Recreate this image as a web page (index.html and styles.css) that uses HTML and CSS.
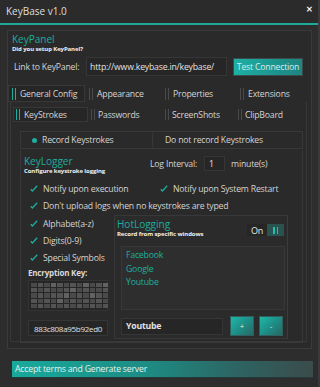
FILE: index.html
```html
<!DOCTYPE html>
<html>
<head>
<meta charset="utf-8">
<title>KeyBase v1.0</title>
<link rel="stylesheet" href="styles.css">
</head>
<body>
<div class="window">
  <header class="titlebar">
    <span class="title">KeyBase v1.0</span>
    <span class="close">✕</span>
  </header>
  <main class="content">
    <section class="outer">
      <div class="heading kp">
        <div class="h-title">KeyPanel</div>
        <div class="h-sub">Did you setup KeyPanel?</div>
      </div>
      <div class="link-row">
        <span class="label">Link to KeyPanel:</span>
        <div class="field url">http://www.keybase.in/keybase/</div>
        <div class="btn test">Test Connection</div>
      </div>
      <nav class="tabs main-tabs">
        <div class="tab active"><i class="bars"></i>General Config</div>
        <div class="tab"><i class="bars"></i>Appearance</div>
        <div class="tab"><i class="bars"></i>Properties</div>
        <div class="tab"><i class="bars"></i>Extensions</div>
      </nav>
      <div class="tabpanel">
        <nav class="tabs sub-tabs">
          <div class="tab active"><i class="bars"></i>KeyStrokes</div>
          <div class="tab"><i class="bars"></i>Passwords</div>
          <div class="tab"><i class="bars"></i>ScreenShots</div>
          <div class="tab"><i class="bars"></i>ClipBoard</div>
        </nav>
        <div class="radio-row">
          <div class="radio"><i class="dot"></i>Record Keystrokes</div>
          <div class="radio alt">Do not record Keystrokes</div>
        </div>
        <section class="keylogger">
          <div class="kl-head">
            <div class="heading">
              <div class="h-title">KeyLogger</div>
              <div class="h-sub">Configure keystroke logging</div>
            </div>
            <div class="interval">
              <span>Log Interval:</span>
              <div class="field num">1</div>
              <span>minute(s)</span>
            </div>
          </div>
          <div class="check-pair">
            <div class="check"><svg class="tick" viewBox="0 0 8 7"><path d="M0.8 4.2 L2.4 6 L7.2 0.8"/></svg>Notify upon execution</div>
            <div class="check"><svg class="tick" viewBox="0 0 8 7"><path d="M0.8 4.2 L2.4 6 L7.2 0.8"/></svg>Notify upon System Restart</div>
          </div>
          <div class="check"><svg class="tick" viewBox="0 0 8 7"><path d="M0.8 4.2 L2.4 6 L7.2 0.8"/></svg>Don't upload logs when no keystrokes are typed</div>
          <div class="split">
            <div class="left-col">
              <div class="check"><svg class="tick" viewBox="0 0 8 7"><path d="M0.8 4.2 L2.4 6 L7.2 0.8"/></svg>Alphabet(a-z)</div>
              <div class="check"><svg class="tick" viewBox="0 0 8 7"><path d="M0.8 4.2 L2.4 6 L7.2 0.8"/></svg>Digits(0-9)</div>
              <div class="check"><svg class="tick" viewBox="0 0 8 7"><path d="M0.8 4.2 L2.4 6 L7.2 0.8"/></svg>Special Symbols</div>
              <div class="enc-label">Encryption Key:</div>
              <div class="key-box">
                <div class="key-grid">
                  <i class="g2"></i><i class="g1"></i><i class="g2"></i><i class="g3"></i><i class="g1"></i><i class="g2"></i><i class="g1"></i><i class="g2"></i><i class="g3"></i><i class="g2"></i><i class="g1"></i><i class="g3"></i>
                  <i class="g1"></i><i class="g2"></i><i class="g1"></i><i class="g2"></i><i class="g2"></i><i class="g1"></i><i class="g3"></i><i class="g2"></i><i class="g1"></i><i class="g2"></i><i class="g2"></i><i class="g1"></i>
                  <i class="g2"></i><i class="g1"></i><i class="g2"></i><i class="g1"></i><i class="g1"></i><i class="g3"></i><i class="g2"></i><i class="g1"></i><i class="g2"></i><i class="g3"></i><i class="g1"></i><i class="g2"></i>
                  <i class="g1"></i><i class="g2"></i><i class="g1"></i><i class="g2"></i><i class="g3"></i><i class="g2"></i><i class="g1"></i><i class="g2"></i><i class="g1"></i><i class="g2"></i><i class="g1"></i><i class="g2"></i>
                  <i class="g2"></i><i class="g1"></i><i class="g2"></i><i class="g1"></i><i class="g2"></i><i class="g1"></i><i class="g2"></i><i class="g1"></i><i class="g2"></i><i class="g1"></i><i class="g2"></i><i class="g1"></i>
                </div>
              </div>
              <div class="field hex">883c808a95b92ed0</div>
            </div>
            <section class="hotlog">
              <div class="hl-head">
                <div class="heading">
                  <div class="h-title">HotLogging</div>
                  <div class="h-sub">Record from specific windows</div>
                </div>
                <div class="toggle"><span>On</span><span class="pause"><i></i><i></i></span></div>
              </div>
              <div class="list">
                <div>Facebook</div>
                <div>Google</div>
                <div>Youtube</div>
              </div>
              <div class="add-row">
                <div class="field win">Youtube</div>
                <div class="btn sq">+</div>
                <div class="btn sq">-</div>
              </div>
            </section>
          </div>
        </section>
      </div>
    </section>
    <div class="generate">Accept terms and Generate server</div>
  </main>
</div>
</body>
</html>
```
FILE: styles.css
```css
* { box-sizing: border-box; }
html, body { margin: 0; padding: 0; }
body {
  background: #2d2d2d;
  font-family: "Open Sans", "Noto Sans", sans-serif;
  font-size: 8.7px;
  color: #d4d4d4;
  letter-spacing: -0.2px;
}
.window {
  width: 320px;
  height: 387px;
  overflow: hidden;
  background: #2d2d2d;
  border-right: 2px solid #3a3a3a;
}
.titlebar {
  height: 25px;
  border-bottom: 2px solid #1ea99b;
  display: flex;
  align-items: center;
  justify-content: space-between;
  padding: 0 6px 1px 6px;
  background: #2b2b2b;
}
.title { font-size: 10px; color: #dedede; letter-spacing: 0; }
.close { font-size: 8px; font-weight: bold; color: #f2f2f2; margin-top: -6px; margin-right: -1px; }

.content { padding: 5px 0 0 7px; }
.outer {
  width: 305px;
  height: 319px;
  border: 1px solid #3a3a3a;
  background: #2a2a2a;
  padding: 3px 0 0 4px;
}
.heading { display: flex; flex-direction: column; }
.h-title { color: #1eae9f; font-size: 10px; line-height: 11px; letter-spacing: 0; }
.h-sub { color: #f0f0f0; font-size: 6px; line-height: 7px; font-weight: bold; letter-spacing: -0.1px; margin-top: 1px; }

.link-row {
  display: flex;
  align-items: center;
  margin-top: 4px;
  height: 19px;
  padding-left: 2px;
}
.label { width: 72px; }
.field {
  background: #262626;
  border: 1px solid #363636;
  display: flex;
  align-items: center;
  color: #e2e2e2;
}
.url { width: 141px; height: 19px; padding-left: 3px; }
.btn {
  display: flex;
  align-items: center;
  justify-content: center;
  color: #e8f4f3;
}
.test {
  margin-left: 6px;
  width: 70px;
  height: 18px;
  background: linear-gradient(90deg, #1fb0a6, #1c958f 60%, #1f8581);
  border: 1px solid #3c4a49;
  color: #d8ecea;
}

.tabs { display: flex; }
.tab {
  display: flex;
  align-items: center;
  color: #d4d4d4;
}
.bars {
  width: 4px;
  height: 12px;
  margin-right: 4px;
  border-left: 1.5px solid #4a4a4a;
  border-right: 1.5px solid #4a4a4a;
}
.tab.active { background: #262626; border: 1px solid #383838; }
.tab.active .bars { border-color: #1eae9f; }

.main-tabs { margin: 9px 0 0 -4px; height: 17px; }
.main-tabs .tab { padding-left: 4px; }
.main-tabs .tab:nth-child(1) { width: 77px; padding-left: 3px; }
.main-tabs .tab:nth-child(2) { width: 76px; }
.main-tabs .tab:nth-child(3) { width: 75px; }
.main-tabs .tab:nth-child(4) { width: 70px; }

.tabpanel {
  margin-left: -2px;
  width: 297px;
  height: 240px;
  border: 1px solid #383838;
  border-top: none;
  padding: 5px 0 0 2px;
}
.sub-tabs { height: 15px; }
.sub-tabs .tab { padding-left: 3px; }
.sub-tabs .tab .bars { height: 11px; }
.sub-tabs .tab:nth-child(1) { width: 75px; padding-left: 2px; }
.sub-tabs .tab:nth-child(2) { width: 74px; }
.sub-tabs .tab:nth-child(3) { width: 73px; }
.sub-tabs .tab:nth-child(4) { width: 60px; }
.sub-tabs .tab:not(.active) .bars { margin-right: 3px; }

.radio-row {
  display: flex;
  margin: 9px 0 0 7px;
  width: 283px;
  height: 18px;
  border: 1px solid #383838;
}
.radio { display: flex; align-items: center; }
.radio:first-child { width: 131px; padding-left: 11px; }
.dot {
  width: 5px; height: 5px; border-radius: 50%;
  background: #1eae9f;
  margin-right: 5px;
}
.radio.alt {
  flex: 1;
  border-left: 1px solid #383838;
  border-radius: 3px 0 0 3px;
  padding-left: 12px;
}

.keylogger {
  margin: 1px 0 0 7px;
  width: 283px;
  height: 193px;
  border: 1px solid #383838;
  border-top: none;
  padding: 6px 0 0 3px;
}
.kl-head { display: flex; align-items: flex-start; }
.kl-head .heading { width: 126px; }
.interval { display: flex; align-items: center; margin-top: 0; }
.num { width: 21px; height: 15px; margin: 0 6px 0 7px; padding-left: 4px; }

.check { display: flex; align-items: center; height: 17px; padding-left: 6px; white-space: nowrap; }
.tick {
  width: 8px; height: 7px;
  margin-right: 5px;
  fill: none;
  stroke: #1eae9f;
  stroke-width: 1.3;
}
.check-pair { display: flex; margin-top: 5px; }
.check-pair .check:first-child { width: 130px; }
.check-pair .check:last-child { padding-left: 6px; }

.split { display: flex; margin-top: 1px; }
.left-col { width: 90px; display: flex; flex-direction: column; }
.enc-label { margin: 1px 0 0 4px; color: #d8d8d8; font-weight: bold; font-size: 8px; line-height: 12px; }
.key-box {
  margin: 1px 0 0 4px;
  width: 80px;
  height: 31px;
  background: #262626;
  border: 1px solid #333;
  padding: 2px 0 0 2px;
}
.key-grid {
  display: grid;
  grid-template-columns: repeat(12, 5.5px);
  grid-auto-rows: 4.2px;
  gap: 1px;
}
.key-grid i { display: block; }
.g1 { background: #545454; }
.g2 { background: #4a4a4a; }
.g3 { background: #626262; }
.hex {
  margin: 9px 0 0 4px;
  width: 80px;
  height: 16px;
  justify-content: center;
  font-size: 8px;
  color: #e0e0e0;
  letter-spacing: -0.3px;
}

.hotlog {
  margin-top: 0;
  width: 174px;
  height: 124px;
  border: 1px solid #383838;
  border-right-color: #3c3c3c;
  padding: 3px 3px 0 2px;
  background: #2b2b2b;
}
.hl-head { display: flex; justify-content: space-between; align-items: flex-start; }
.toggle {
  display: flex;
  align-items: center;
  height: 12px;
  margin-top: 5px;
  background: #262626;
  font-size: 9px;
}
.toggle span:first-child { padding: 0 4px 0 4px; color: #e6e6e6; }
.pause {
  display: flex;
  gap: 2px;
  justify-content: center;
  align-items: center;
  width: 17px;
  height: 12px;
  background: #28534f;
}
.pause i { width: 1.5px; height: 7px; background: #1fc2b1; }

.list {
  margin: 8px 0 0 4px;
  width: 164px;
  height: 64px;
  border: 1px solid #383838;
  background: #2e2e2e;
  padding: 2px 0 0 4px;
  color: #1eae9f;
  line-height: 13.5px;
}
.add-row { display: flex; align-items: center; margin: 6px 0 0 4px; }
.win { width: 102px; height: 17px; padding-left: 4px; font-weight: bold; }
.sq {
  width: 24px;
  height: 20px;
  font-size: 7px;
  margin-left: 7px;
  background: linear-gradient(135deg, #1fb7a8, #1e8b84 55%, #2b6664);
  border: 1px solid #2f5f5c;
}
.sq + .sq { margin-left: 5px; }

.generate {
  margin: 12px 0 0 5px;
  width: 301px;
  height: 17px;
  display: flex;
  align-items: center;
  padding-left: 3px;
  color: #e6f2f1;
  background: linear-gradient(90deg, #17aa9c, #1d8c84 45%, #2d6462 75%, #3b4b4b);
  border-bottom: 1px solid #243a39;
}
```
